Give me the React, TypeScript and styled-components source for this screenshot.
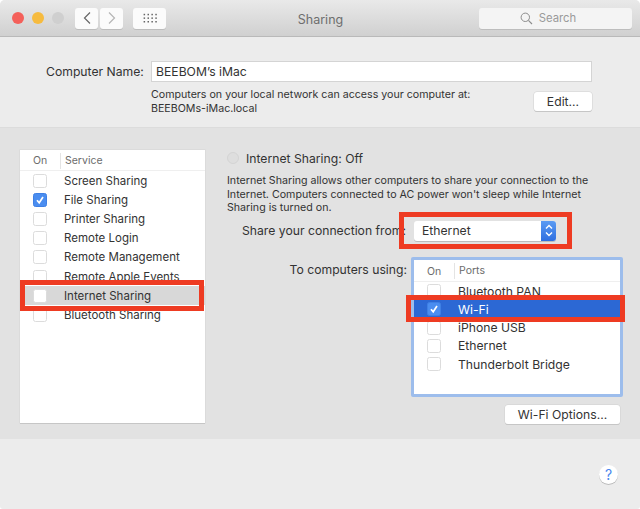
import React from "react";
import styled, { createGlobalStyle } from "styled-components";

const GlobalStyle = createGlobalStyle`
    html, body {
        margin: 0;
        padding: 0;
        background: #ffffff;
    }
    body {
        font-family: "Inter", "Liberation Sans", sans-serif;
        font-size: 12.2px;
        color: #333333;
    }
`;

const services = [
    { name: "Screen Sharing" },
    { name: "File Sharing", on: true },
    { name: "Printer Sharing" },
    { name: "Remote Login" },
    { name: "Remote Management" },
    { name: "Remote Apple Events" },
    { name: "Internet Sharing", selected: true },
    { name: "Bluetooth Sharing" },
];

const ports = [
    { name: "Bluetooth PAN" },
    { name: "Wi-Fi", on: true, selected: true },
    { name: "iPhone USB" },
    { name: "Ethernet" },
    { name: "Thunderbolt Bridge" },
];

function Tick() {
    return (
        <svg width="10" height="10" viewBox="0 0 10 10">
            <path d="M2 5.2 L4.2 7.8 L8 2" fill="none" stroke="#fff" strokeWidth="1.7" />
        </svg>
    );
}

export default function App() {
    return (
        <Window>
            <GlobalStyle />
            <TitleBar>
                <Lights>
                    <Light $color="#f4605a" />
                    <Light $color="#f6bb3f" />
                    <Light $color="#cfcfcf" />
                </Lights>
                <NavGroup>
                    <NavButton>
                        <svg width="10" height="14" viewBox="0 0 10 14">
                            <path d="M8 1.5 L2.5 7 L8 12.5" fill="none" stroke="#666" strokeWidth="1.2" />
                        </svg>
                    </NavButton>
                    <NavButton>
                        <svg width="10" height="14" viewBox="0 0 10 14">
                            <path d="M2 1.5 L7.5 7 L2 12.5" fill="none" stroke="#b5b5b5" strokeWidth="1.2" />
                        </svg>
                    </NavButton>
                </NavGroup>
                <GridButton>
                    <svg width="14" height="10" viewBox="0 0 14 10" fill="#666">
                        {[0, 1, 2].map((r) =>
                            [0, 1, 2, 3].map((c) => (
                                <rect key={`${r}-${c}`} x={c * 3.9 + 0.6} y={r * 3.6 + 0.8} width="1.5" height="1.5" />
                            ))
                        )}
                    </svg>
                </GridButton>
                <Title>Sharing</Title>
                <SearchBox>
                    <svg width="13" height="13" viewBox="0 0 13 13">
                        <circle cx="5.3" cy="5.3" r="4.2" fill="none" stroke="#8c8c8c" strokeWidth="1" />
                        <path d="M8.4 8.4 L12 12" stroke="#8c8c8c" strokeWidth="1.1" />
                    </svg>
                    Search
                </SearchBox>
            </TitleBar>

            <NameSection>
                <NameRow>
                    <NameLabel>Computer Name:</NameLabel>
                    <NameInput>BEEBOM’s iMac</NameInput>
                </NameRow>
                <AddressRow>
                    <SmallText>
                        Computers on your local network can access your computer at:
                        <br />
                        BEEBOMs-iMac.local
                    </SmallText>
                    <EditButton>Edit...</EditButton>
                </AddressRow>
            </NameSection>

            <MainSection>
                <ServicePanel>
                    <ServiceHeader>
                        <OnHead>On</OnHead>
                        <NameHead>Service</NameHead>
                    </ServiceHeader>
                    {services.map((s) => (
                        <ServiceRow key={s.name} $selected={s.selected}>
                            <Check $on={s.on}>{s.on && <Tick />}</Check>
                            {s.name}
                        </ServiceRow>
                    ))}
                </ServicePanel>

                <Detail>
                    <StatusRow>
                        <Radio />
                        Internet Sharing: Off
                    </StatusRow>
                    <Description>
                        Internet Sharing allows other computers to share your connection to the
                        <br />
                        Internet. Computers connected to AC power won't sleep while Internet
                        <br />
                        Sharing is turned on.
                    </Description>
                    <ShareRow>
                        <ShareLabel>Share your connection from:</ShareLabel>
                        <Select>
                            Ethernet
                            <SelectArrows>
                                <svg width="10" height="15" viewBox="0 0 10 15">
                                    <path d="M2 5.5 L5 2.5 L8 5.5 M2 9.5 L5 12.5 L8 9.5" fill="none" stroke="#fff" strokeWidth="1.4" />
                                </svg>
                            </SelectArrows>
                        </Select>
                    </ShareRow>
                    <UsingRow>
                        <UsingLabel>To computers using:</UsingLabel>
                        <PortsPanel>
                            <ListHeader>
                                <OnHead>On</OnHead>
                                <NameHead>Ports</NameHead>
                            </ListHeader>
                            {ports.map((p) => (
                                <PortRow key={p.name} $selected={p.selected}>
                                    <Check $on={p.on}>{p.on && <Tick />}</Check>
                                    {p.name}
                                </PortRow>
                            ))}
                        </PortsPanel>
                    </UsingRow>
                    <OptionsRow>
                        <OptionsButton>Wi-Fi Options...</OptionsButton>
                    </OptionsRow>
                </Detail>
            </MainSection>

            <Footer>
                <HelpButton>?</HelpButton>
            </Footer>

            <Callout $left={20} $top={280} $width={184} $height={31} />
            <Callout $left={399} $top={212} $width={173} $height={37} />
            <Callout $left={406} $top={295} $width={219} $height={27} />
        </Window>
    );
}

// styled components
const Window = styled.div`
    position: relative;
    width: 640px;
    height: 509px;
    overflow: hidden;
    display: flex;
    flex-direction: column;
    background: #ececec;
    border-radius: 5px 5px 3px 3px;
`;

const TitleBar = styled.div`
    height: 37px;
    box-sizing: border-box;
    display: flex;
    align-items: center;
    padding: 0 8px 0 12px;
    background: linear-gradient(#e9e9e9, #d0d0d0);
    border-bottom: 1px solid #b9b9b9;
    position: relative;
`;

const Lights = styled.div`
    display: flex;
    gap: 8px;
    width: 63px;
`;

const Light = styled.span<{ $color: string }>`
    width: 12px;
    height: 12px;
    border-radius: 50%;
    background: ${(p) => p.$color};
`;

const NavGroup = styled.div`
    display: flex;
    gap: 2px;
`;

const NavButton = styled.div`
    width: 23px;
    height: 21px;
    display: flex;
    align-items: center;
    justify-content: center;
    background: #fbfbfb;
    border-radius: 3px;
    box-shadow: 0 1px 0 #bdbdbd;
`;

const GridButton = styled(NavButton)`
    width: 33px;
    margin-left: 10px;
`;

const Title = styled.div`
    flex: 1;
    text-align: center;
    padding: 2px 4px 0 0;
    font-size: 12.5px;
    color: #6e6e6e;
`;

const SearchBox = styled.div`
    width: 153px;
    height: 21px;
    box-sizing: border-box;
    padding-right: 15px;
    display: flex;
    align-items: center;
    justify-content: center;
    gap: 6px;
    font-size: 11.3px;
    background: #f4f4f4;
    border-radius: 3px;
    box-shadow: 0 1px 0 #bdbdbd;
    color: #9a9a9a;
`;

const NameSection = styled.div`
    height: 91px;
    box-sizing: border-box;
    padding: 23.5px 48px 0 46px;
    border-bottom: 1px solid #dcdcdc;
`;

const NameRow = styled.div`
    display: flex;
    align-items: center;
    gap: 6px;
`;

const NameLabel = styled.div`
    width: 99px;
    white-space: nowrap;
`;

const NameInput = styled.div`
    flex: 1;
    height: 21px;
    box-sizing: border-box;
    padding-left: 4px;
    line-height: 20px;
    background: #fff;
    border: 1px solid #d4d4d4;
`;

const AddressRow = styled.div`
    display: flex;
    justify-content: space-between;
    align-items: center;
    margin: 6px 0 0 105px;
`;

const SmallText = styled.div`
    font-size: 10.65px;
    line-height: 14px;
`;

const PushButton = styled.div`
    display: flex;
    align-items: center;
    justify-content: center;
    height: 19px;
    background: #fff;
    border-radius: 3px;
    box-shadow: 0 0 0 0.5px #d0d0d0, 0 1px 0 #bcbcbc;
`;

const EditButton = styled(PushButton)`
    width: 58px;
`;

const MainSection = styled.div`
    height: 311px;
    box-sizing: border-box;
    display: flex;
    padding: 22px 20px 0 20px;
    background: #e2e2e2;
`;

const ServicePanel = styled.div`
    width: 185px;
    height: 273px;
    flex: none;
    background: #fff;
    box-shadow: 0 1px 0 #c6c6c6, 0 0 0 0.5px #d4d4d4;
`;

const ListHeader = styled.div`
    height: 22px;
    padding-top: 1px;
    display: flex;
    align-items: center;
    border-bottom: 1px solid #efefef;
    box-sizing: border-box;
    color: #6c6c6c;
    font-size: 10.5px;
`;

const ServiceHeader = styled(ListHeader)`
    height: 21.3px;
`;

const OnHead = styled.div`
    width: 40px;
    box-sizing: border-box;
    padding-left: 13px;
`;

const NameHead = styled.div`
    border-left: 1px solid #e4e4e4;
    padding-left: 4px;
    line-height: 16px;
`;

const ServiceRow = styled.div<{ $selected?: boolean }>`
    height: 19.15px;
    display: flex;
    align-items: center;
    padding-left: 13px;
    font-size: 11.5px;
    background: ${(p) => (p.$selected ? "#d8d8d8" : "transparent")};
    & > span {
        margin-right: 17px;
    }
`;

const Check = styled.span<{ $on?: boolean }>`
    width: 14px;
    height: 14px;
    box-sizing: border-box;
    flex: none;
    display: flex;
    align-items: center;
    justify-content: center;
    border-radius: 2.5px;
    background: ${(p) => (p.$on ? "#4a8df0" : "#fff")};
    border: 1px solid ${(p) => (p.$on ? "#3f80e4" : "#dcdcdc")};
`;

const Detail = styled.div`
    flex: 1;
    min-width: 0;
    padding-left: 22px;
`;

const StatusRow = styled.div`
    display: flex;
    align-items: center;
    gap: 7px;
    height: 16px;
    margin-bottom: 8px;
`;

const Radio = styled.span`
    width: 10px;
    height: 10px;
    border-radius: 50%;
    background: #dedede;
    border: 1px solid #d4d4d4;
`;

const Description = styled.div`
    font-size: 10.65px;
    line-height: 13.5px;
`;

const ShareRow = styled.div`
    display: flex;
    align-items: center;
    margin: 6px 0 0 15px;
`;

const ShareLabel = styled.div`
    width: 172px;
    white-space: nowrap;
`;

const Select = styled.div`
    width: 142px;
    height: 20px;
    box-sizing: border-box;
    padding-left: 8px;
    display: flex;
    align-items: center;
    justify-content: space-between;
    background: #fff;
    border-radius: 3px;
    box-shadow: 0 1px 0 #bcbcbc;
    overflow: hidden;
`;

const SelectArrows = styled.span`
    width: 15px;
    height: 20px;
    display: flex;
    align-items: center;
    justify-content: center;
    background: linear-gradient(#5b9bf3, #2f6fe0);
`;

const UsingRow = styled.div`
    display: flex;
    margin: 16.5px -3px 0 0;
    align-items: flex-start;
`;

const UsingLabel = styled.div`
    width: 184px;
    flex: none;
    box-sizing: border-box;
    padding: 5px 4px 0 0;
    text-align: right;
    white-space: nowrap;
`;

const PortsPanel = styled.div`
    width: 212px;
    height: 140px;
    flex: none;
    box-sizing: border-box;
    background: #fff;
    border: 3px solid #9dbdec;
    border-radius: 2px;
`;

const PortRow = styled.div<{ $selected?: boolean }>`
    height: 18.25px;
    display: flex;
    align-items: center;
    padding-left: 13px;
    background: ${(p) => (p.$selected ? "#2c68d4" : "transparent")};
    color: ${(p) => (p.$selected ? "#fff" : "inherit")};
    & > span {
        margin-right: 17px;
    }
`;

const OptionsRow = styled.div`
    display: flex;
    justify-content: flex-end;
    margin-top: 8px;
`;

const OptionsButton = styled(PushButton)`
    width: 115px;
`;

const Footer = styled.div`
    flex: 1;
    display: flex;
    justify-content: flex-end;
    padding: 26px 22px 0 0;
`;

const HelpButton = styled.div`
    width: 19px;
    height: 19px;
    border-radius: 50%;
    display: flex;
    align-items: center;
    justify-content: center;
    background: #fff;
    color: #4a86ee;
    font-size: 14px;
    box-shadow: 0 1px 0 #bcbcbc;
`;

const Callout = styled.div<{ $left: number; $top: number; $width: number; $height: number }>`
    position: absolute;
    left: ${(p) => p.$left}px;
    top: ${(p) => p.$top}px;
    width: ${(p) => p.$width}px;
    height: ${(p) => p.$height}px;
    box-sizing: border-box;
    border: 5px solid #ee3b22;
`;
